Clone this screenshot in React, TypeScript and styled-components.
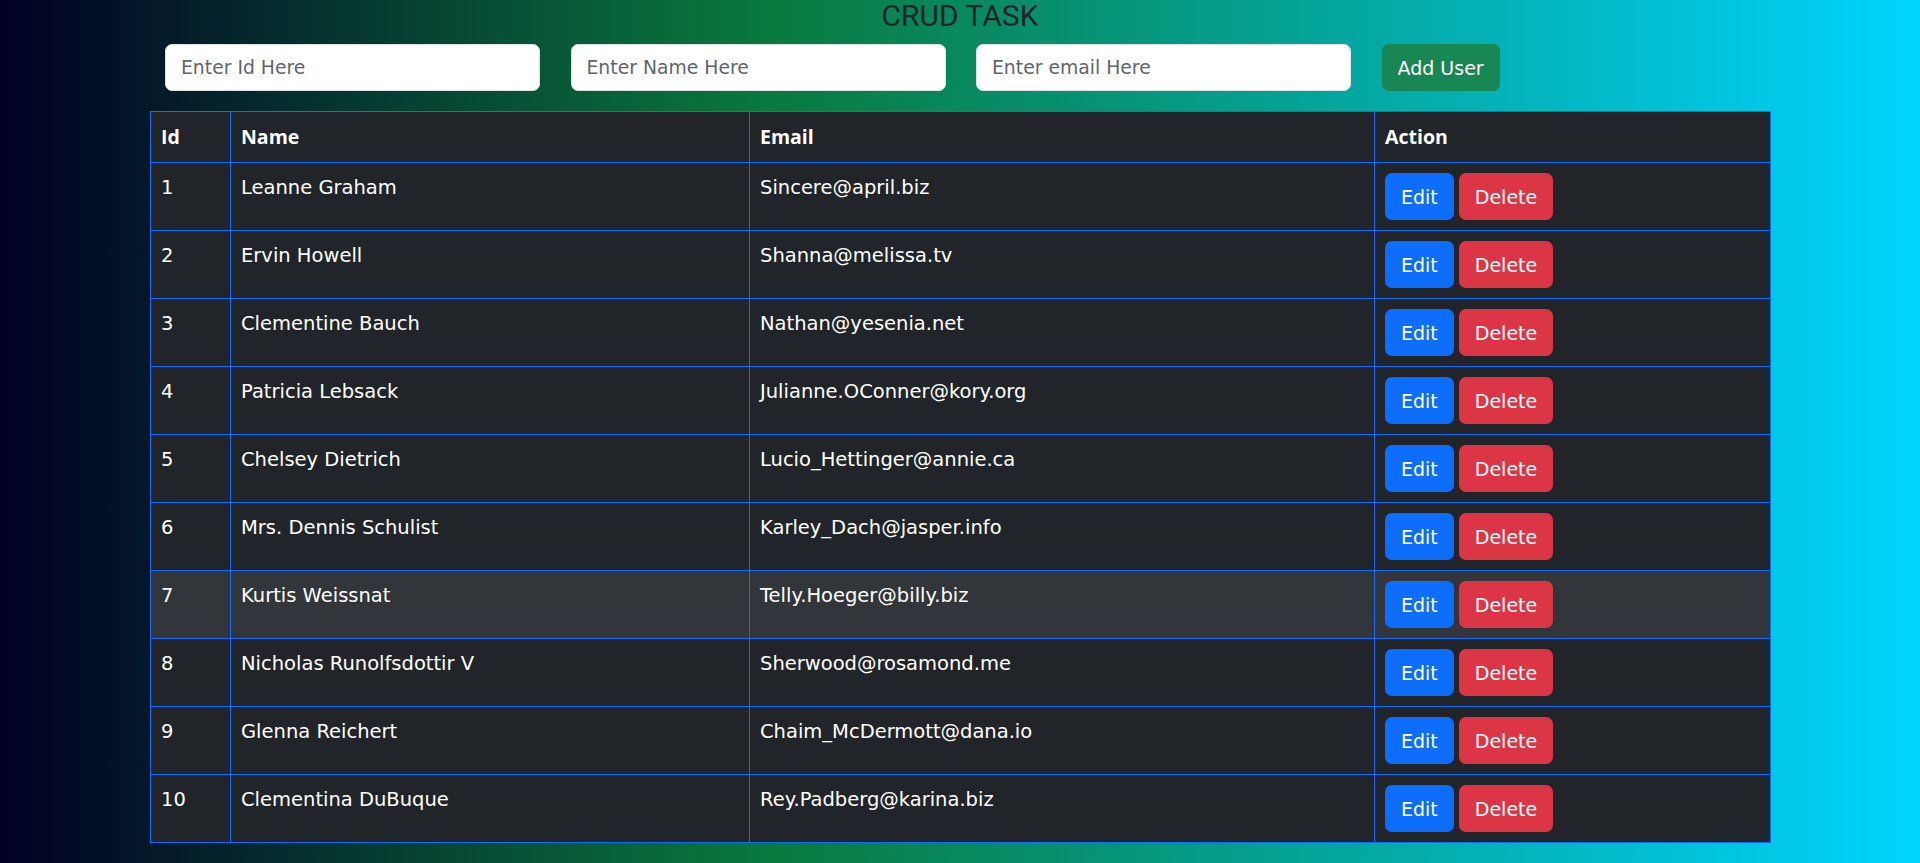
import React from "react";
import styled, { createGlobalStyle } from "styled-components";

const GlobalStyle = createGlobalStyle`
  html, body {
    margin: 0;
    padding: 0;
  }
  body {
    min-height: 100vh;
    background: linear-gradient(90deg, rgb(2, 0, 36) 0%, rgb(9, 121, 62) 40%, rgb(0, 212, 255) 100%);
    font-family: "DejaVu Sans", "Noto Sans", sans-serif;
  }
  * { box-sizing: border-box; }
`;

const Page = styled.div`
  width: 1620px;
  margin: 0 auto;
  display: flex;
  flex-direction: column;
`;

const Title = styled.h1`
  margin: -2px 0 0;
  font-family: Roboto, "Liberation Sans", sans-serif;
  font-weight: 400;
  font-size: 30px;
  line-height: 35px;
  color: #212529;
  text-align: center;
`;

const FormRow = styled.div`
  display: flex;
  align-items: center;
  gap: 30.5px;
  padding-left: 15px;
  margin-top: 11px;
`;

const Input = styled.input`
  width: 375px;
  height: 47px;
  padding: 0 15px;
  border: 1px solid #dee2e6;
  border-radius: 7px;
  background: #fff;
  font-family: "DejaVu Sans", sans-serif;
  font-size: 18.8px;
  color: #212529;
  outline: none;
  &::placeholder {
    color: #5f666d;
  }
`;

const Button = styled.button<{ $variant: "success" | "primary" | "danger" }>`
  height: 47px;
  padding: 0 15px;
  border: 1px solid transparent;
  border-radius: 7px;
  font-family: "DejaVu Sans", sans-serif;
  font-size: 19px;
  color: #fff;
  cursor: pointer;
  background: ${(p) =>
    p.$variant === "success" ? "#198754" : p.$variant === "primary" ? "#0d6efd" : "#dc3545"};
  & + & {
    margin-left: 5px;
  }
`;

const Table = styled.table`
  margin-top: 20px;
  width: 1620px;
  table-layout: fixed;
  border-collapse: collapse;
  background: #212529;
  color: #fff;
`;

const Th = styled.th`
  border: 1px solid #0d6efd;
  padding: 10px;
  text-align: left;
  font-family: "Open Sans", sans-serif;
  font-weight: 700;
  font-size: 19.5px;
  line-height: 30px;
`;

const Row = styled.tr<{ $hover?: boolean }>`
  background: ${(p) => (p.$hover ? "#323539" : "transparent")};
`;

const Td = styled.td`
  border: 1px solid #0d6efd;
  padding: 10px;
  vertical-align: top;
  font-size: 19.5px;
  line-height: 30px;
`;

const users = [
  { id: 1, name: "Leanne Graham", email: "Sincere@april.biz" },
  { id: 2, name: "Ervin Howell", email: "Shanna@melissa.tv" },
  { id: 3, name: "Clementine Bauch", email: "Nathan@yesenia.net" },
  { id: 4, name: "Patricia Lebsack", email: "Julianne.OConner@kory.org" },
  { id: 5, name: "Chelsey Dietrich", email: "Lucio_Hettinger@annie.ca" },
  { id: 6, name: "Mrs. Dennis Schulist", email: "Karley_Dach@jasper.info" },
  { id: 7, name: "Kurtis Weissnat", email: "Telly.Hoeger@billy.biz" },
  { id: 8, name: "Nicholas Runolfsdottir V", email: "Sherwood@rosamond.me" },
  { id: 9, name: "Glenna Reichert", email: "Chaim_McDermott@dana.io" },
  { id: 10, name: "Clementina DuBuque", email: "Rey.Padberg@karina.biz" },
];

export default function App() {
  return (
    <>
      <GlobalStyle />
      <Page>
        <Title>CRUD TASK</Title>
        <FormRow>
          <Input placeholder="Enter Id Here" />
          <Input placeholder="Enter Name Here" />
          <Input placeholder="Enter email Here" />
          <Button $variant="success">Add User</Button>
        </FormRow>
        <Table>
          <colgroup>
            <col style={{ width: 80 }} />
            <col style={{ width: 519 }} />
            <col style={{ width: 625 }} />
            <col style={{ width: 396 }} />
          </colgroup>
          <thead>
            <tr>
              <Th>Id</Th>
              <Th>Name</Th>
              <Th>Email</Th>
              <Th>Action</Th>
            </tr>
          </thead>
          <tbody>
            {users.map((u) => (
              <Row key={u.id} $hover={u.id === 7}>
                <Td>{u.id}</Td>
                <Td>{u.name}</Td>
                <Td>{u.email}</Td>
                <Td>
                  <Button $variant="primary">Edit</Button>
                  <Button $variant="danger">Delete</Button>
                </Td>
              </Row>
            ))}
          </tbody>
        </Table>
      </Page>
    </>
  );
}
